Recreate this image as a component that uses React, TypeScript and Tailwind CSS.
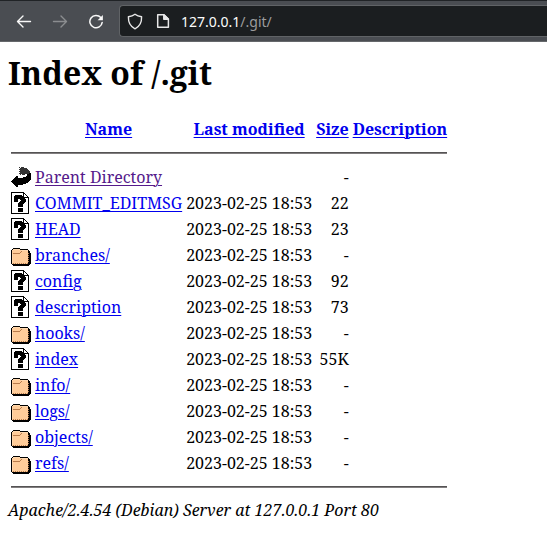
import React from "react";

type Kind = "back" | "unknown" | "folder";

const entries: { kind: Kind; name: string; date: string; size: string }[] = [
  { kind: "back", name: "Parent Directory", date: "", size: "-" },
  { kind: "unknown", name: "COMMIT_EDITMSG", date: "2023-02-25 18:53", size: "22" },
  { kind: "unknown", name: "HEAD", date: "2023-02-25 18:53", size: "23" },
  { kind: "folder", name: "branches/", date: "2023-02-25 18:53", size: "-" },
  { kind: "unknown", name: "config", date: "2023-02-25 18:53", size: "92" },
  { kind: "unknown", name: "description", date: "2023-02-25 18:53", size: "73" },
  { kind: "folder", name: "hooks/", date: "2023-02-25 18:53", size: "-" },
  { kind: "unknown", name: "index", date: "2023-02-25 18:53", size: "55K" },
  { kind: "folder", name: "info/", date: "2023-02-25 18:53", size: "-" },
  { kind: "folder", name: "logs/", date: "2023-02-25 18:53", size: "-" },
  { kind: "folder", name: "objects/", date: "2023-02-25 18:53", size: "-" },
  { kind: "folder", name: "refs/", date: "2023-02-25 18:53", size: "-" },
];

// 20x22 pixel bitmaps: k black, g dark grey, p peach, w pale peach, b brown
const bitmaps: Record<Kind, string[]> = {
  back: [
    "",
    "........g.ggg",
    ".........ggggggg",
    "........ggggggggg",
    ".........ggggggggg",
    "........ggggggggggg",
    ".........gggggggggg",
    "........ggggggggggkk",
    ".........g.ggg..kkkk",
    "................kkkk",
    ".....kk........kkkkk",
    "....kkk.....kkkkkkkk",
    "...kkkkkkkkkkkkkkkkk",
    "..kkkkkkkkkkkkkkkkkk",
    ".kkkkkkkkkkkkkkkkkk",
    "kkkkkkkkkkkkkkkkkk",
    ".kkkkkkkkkkkkkkkk",
    "..kkkkkkkkkkkkk",
    "...kkkkkkkkk",
    "....kkk",
    ".....kk",
    "",
  ],
  unknown: [
    "kkkkkkkkkkkkk",
    "k...........kk",
    "k...........k.k",
    "k...kkkkkkk.k..k",
    "k..kkkkkkkkkk...k",
    "k..kkkkkkkkkkkkkkk",
    "k..kkkkkkkkkkk...k",
    "k..kkkk..kkkkkk..k",
    "k..kkkk...kkkkk..k",
    "k..kkkk..kkkkkk..k",
    "k.......kkkkkk...k",
    "k......kkkkkk....k",
    "k......kkkkk.....k",
    "k......kkkkk.....k",
    "k......kkkkk.....k",
    "k................k",
    "k......kkkkk.....k",
    "k......kkkkk.....k",
    "k......kkkkk.....k",
    "k......kkkkk.....k",
    "k................k",
    "kkkkkkkkkkkkkkkkkk",
  ],
  folder: [
    "",
    "",
    "",
    "",
    "..kkkkkkk",
    ".kwwwwwwwkkkkkkkk",
    "kwppppppppwwwwwwwk",
    "kpppppppppbppppppkk",
    "kppppppppbpppppppkk",
    "kpbbbbbbbppppppppbkk",
    "kwpppppppppppppppkkk",
    "kwpppppppppppppppbkk",
    "kwpppppppppppppppkkk",
    "kwpppppppppppppppbkk",
    "kwpppppppppppppppkkk",
    "kwpppppppppppppppbkk",
    "kwpppppppppppppppkkk",
    "kwpppppppppppppppbkk",
    "kwpppppppppppppppkkk",
    "kpbpbpbpbpbpbpbpbkkk",
    ".kkkkkkkkkkkkkkkkkk",
    "..kkkkkkkkkkkkkkkk",
  ],
};

const palette: Record<string, string> = {
  k: "#000000",
  g: "#333333",
  p: "#ffcc99",
  w: "#ffd8ae",
  b: "#b87b4b",
};

function PixelIcon({ kind }: { kind: Kind }) {
  return (
    <svg className="block" width="20" height="22" viewBox="0 0 20 22" shapeRendering="crispEdges" aria-hidden="true">
      {bitmaps[kind].flatMap((row, y) =>
        row.split("").map((c, x) =>
          c === "." ? null : <rect key={`${x}-${y}`} x={x} y={y} width="1" height="1" fill={palette[c]} />
        )
      )}
    </svg>
  );
}

function Toolbar() {
  return (
    <header className="flex h-[42px] items-center border-t border-b border-t-[#202326] border-b-[#65686b] bg-[#4a4d52]">
      <svg className="ml-4 shrink-0" width="16" height="16" viewBox="0 0 16 16" fill="none" stroke="#f8f8f8" strokeWidth="1.4" strokeLinecap="round" strokeLinejoin="round">
        <path d="M14.5 8.5H1.7M7 3L1.5 8.5L7 14" />
      </svg>
      <svg className="ml-5 shrink-0" width="16" height="16" viewBox="0 0 16 16" fill="none" stroke="#8b8d90" strokeWidth="1.4" strokeLinecap="round" strokeLinejoin="round">
        <path d="M1.5 8.5H14.3M9 3L14.5 8.5L9 14" />
      </svg>
      <svg className="ml-5 shrink-0" width="16" height="16" viewBox="0 0 16 16" fill="none" stroke="#f8f8f8" strokeWidth="1.5" strokeLinecap="round">
        <path d="M12.8 4.6A6.2 6.2 0 1 0 14.2 9.4" />
        <path d="M14.9 2v5.2H9.6z" fill="#f8f8f8" stroke="none" />
      </svg>
      <div className="ml-[15px] flex h-8 flex-1 items-center rounded-l border border-r-0 border-[#606366] bg-[#1b1e20]">
        <svg className="ml-[7px] shrink-0" width="16" height="17" viewBox="0 0 16 17" fill="none" stroke="#e8e8e8" strokeWidth="1.4" strokeLinejoin="round">
          <path d="M8 1.2C6 2.8 3.8 3.5 1.4 3.8C1.2 9.5 3.2 13.5 8 15.8C12.8 13.5 14.8 9.5 14.6 3.8C12.2 3.5 10 2.8 8 1.2Z" />
        </svg>
        <svg className="ml-3 shrink-0" width="16" height="16" viewBox="0 0 16 16" fill="none" stroke="#e8e8e8" strokeWidth="1.5" strokeLinejoin="round">
          <path d="M2.7 1.7H9L13.4 6V14.3H2.7Z" />
          <path d="M8.8 1.7V6.2H13.3Z" fill="#e8e8e8" />
        </svg>
        <span className="ml-[10px] pt-0.5 font-['Noto_Sans',sans-serif] text-sm whitespace-pre text-[#fcfcfc]">
          127.0.0.1<span className="text-[#9b9c9d]">/.git/</span>
        </span>
      </div>
    </header>
  );
}

function Rule() {
  return (
    <tr>
      <th colSpan={5} className="p-px">
        <hr className="my-2 h-0.5 border-t border-b border-t-[#555354] border-b-[#817e7f]" />
      </th>
    </tr>
  );
}

const link = "underline decoration-1 underline-offset-2";

export default function App() {
  return (
    <div className="min-h-[553px] w-[547px] overflow-hidden bg-white font-['Noto_Serif','DejaVu_Serif_Condensed',serif] text-base leading-[22px] text-black">
      <Toolbar />
      <main className="px-2 pt-[9px]">
        <h1 className="mb-5 text-[32px] leading-[44px] font-bold">Index of /.git</h1>
        <table className="border-separate border-spacing-0.5">
          <thead>
            <tr>
              <th className="h-6 w-[22px] p-px" />
              {["Name", "Last modified", "Size", "Description"].map((label) => (
                <th key={label} className="p-px text-center font-bold text-[#0000ee]">
                  <a className={link}>{label}</a>
                </th>
              ))}
            </tr>
          </thead>
          <tbody>
            <Rule />
            {entries.map((e) => (
              <tr key={e.name}>
                <td className="p-px align-top">
                  <PixelIcon kind={e.kind} />
                </td>
                <td className={e.kind === "back" ? "p-px text-[#551a8b]" : "p-px text-[#0000ee]"}>
                  <a className={link}>{e.name}</a>
                </td>
                <td className="p-px text-right whitespace-nowrap">{e.date}</td>
                <td className="p-px text-right">{e.size}</td>
                <td className="p-px" />
              </tr>
            ))}
            <Rule />
          </tbody>
        </table>
        <address className="italic">Apache/2.4.54 (Debian) Server at 127.0.0.1 Port 80</address>
      </main>
    </div>
  );
}
